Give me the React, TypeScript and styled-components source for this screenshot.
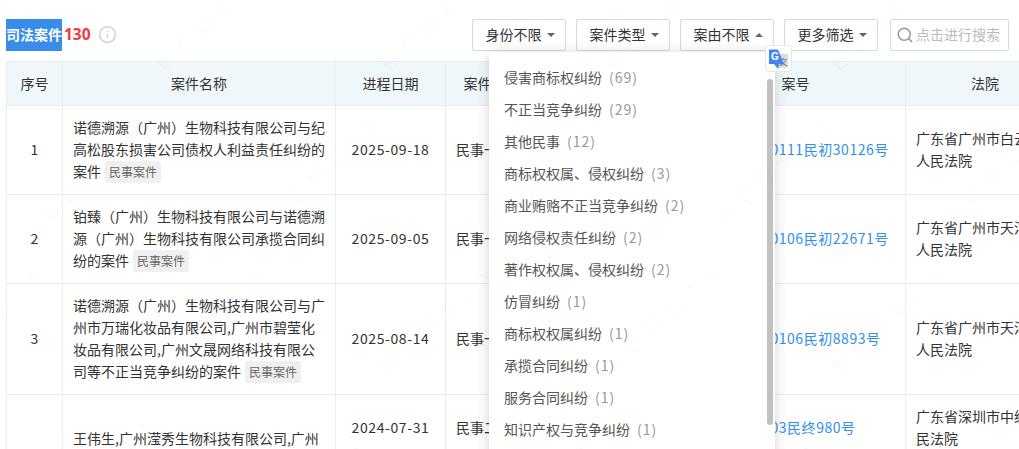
import React from "react";
import styled, { createGlobalStyle } from "styled-components";
import { Info, Search } from "lucide-react";

const Global = createGlobalStyle`
  html, body { margin: 0; padding: 0; background: #fff; overflow: hidden; }
  body { font-family: "Noto Sans CJK SC", "Noto Sans", sans-serif; color: #333; font-size: 14px; }
`;

const Page = styled.div`
  position: relative;
  width: 1019px;
  height: 449px;
  overflow: hidden;
  padding: 19px 0 0 6px;
  box-sizing: border-box;
`;

const Toolbar = styled.div`
  display: flex;
  align-items: flex-start;
  height: 32px;
  margin-bottom: 10px;
  padding-right: 10px;
`;

const Title = styled.div`
  width: 56px;
  height: 32px;
  background: #3a8ceb;
  color: #fff;
  font-weight: 700;
  font-size: 14px;
  line-height: 30px;
  white-space: nowrap;
`;

const Count = styled.span`
  margin-left: 2px;
  color: #f0393f;
  font-family: "Noto Sans", sans-serif;
  font-weight: 700;
  font-size: 15.5px;
  line-height: 30px;
`;

const InfoMark = styled.span`
  display: flex;
  margin: 6px 0 0 7px;
  color: #d6d6d6;
`;

const Filters = styled.div`
  display: flex;
  gap: 10px;
  margin-left: auto;
`;

const FilterButton = styled.div`
  display: flex;
  align-items: center;
  justify-content: center;
  gap: 5px;
  width: 94px;
  height: 32px;
  padding: 0 0 2px 2px;
  box-sizing: border-box;
  border: 1px solid #d9d9d9;
  border-radius: 2px;
  color: #333;
  font-size: 14px;
`;

const Caret = styled.i<{ $up?: boolean }>`
  width: 0;
  height: 0;
  margin-top: 2px;
  border-left: 4px solid transparent;
  border-right: 4px solid transparent;
  border-top: ${(p) => (p.$up ? "0" : "4px solid #666")};
  border-bottom: ${(p) => (p.$up ? "4px solid #666" : "0")};
`;

const SearchBox = styled.div`
  display: flex;
  align-items: center;
  gap: 2px;
  width: 119px;
  height: 32px;
  margin-left: 2px;
  padding: 0 0 2px 5px;
  box-sizing: border-box;
  border: 1px solid #d9d9d9;
  border-radius: 2px;
  color: #bbb;
  font-size: 14px;
  white-space: nowrap;
  overflow: hidden;
  svg { color: #999; flex: none; margin-top: 2px; }
`;

const Table = styled.table`
  border-collapse: collapse;
  table-layout: fixed;
  width: 1058px;
  font-size: 14px;
  line-height: 22px;
`;

const HeadCell = styled.th`
  height: 41px;
  padding: 0 0 2px;
  background: #f0f7fb;
  border: 1px solid #e5edf5;
  font-weight: 400;
  color: #333;
  text-align: center;
`;

const Cell = styled.td<{ $center?: boolean; $top?: number }>`
  padding: ${(p) => (p.$top !== undefined ? `${p.$top}px 10px 0` : "10px 10px 12px")};
  border: 1px solid #e5edf5;
  color: #333;
  text-align: ${(p) => (p.$center ? "center" : "left")};
  vertical-align: ${(p) => (p.$top !== undefined ? "top" : "middle")};
  word-break: break-all;
`;

const NumberText = styled.span`
  letter-spacing: 0.6px;
  white-space: nowrap;
`;

const CaseLink = styled.span`
  display: block;
  margin-left: 16px;
  color: #2f90ee;
  letter-spacing: 0.55px;
  white-space: nowrap;
`;

const Tag = styled.span`
  display: inline-block;
  margin-left: 4px;
  padding: 0 4px;
  height: 22px;
  background: #f0f0f0;
  border-radius: 2px;
  color: #666;
  font-size: 12px;
  line-height: 22px;
  vertical-align: top;
  transform: translateY(1px);
`;

const Dropdown = styled.div`
  position: absolute;
  left: 489px;
  top: 52px;
  width: 286px;
  height: 420px;
  background: #fff;
  box-shadow: 0 2px 12px rgba(0, 0, 0, 0.18);
  padding-top: 9px;
  box-sizing: border-box;
`;

const Option = styled.div`
  height: 32px;
  padding-left: 15px;
  color: #555;
  font-size: 14px;
  line-height: 32px;
  white-space: nowrap;
`;

const OptionCount = styled.span`
  margin-left: 7px;
  color: #999;
  letter-spacing: 1px;
`;

const ScrollThumb = styled.div`
  position: absolute;
  left: 278px;
  top: 27px;
  width: 6px;
  height: 346px;
  border-radius: 3px;
  background: #c1c1c1;
`;

const TranslateBadge = styled.div`
  position: absolute;
  left: 765px;
  top: 45px;
  width: 27px;
  height: 27px;
  box-sizing: border-box;
  background: #fff;
  border: 1px solid #e6e6e6;
  border-radius: 4px;
  display: flex;
  align-items: center;
  justify-content: center;
`;

const Watermark = styled.div`
  position: absolute;
  inset: -60px -120px;
  display: grid;
  grid-template-columns: repeat(6, 225px);
  grid-auto-rows: 150px;
  pointer-events: none;
`;

const WatermarkText = styled.span<{ $shift: boolean }>`
  transform: translateX(${(p) => (p.$shift ? "112px" : "0")}) rotate(-42deg);
  align-self: center;
  justify-self: center;
  color: rgba(0, 0, 0, 0.028);
  font-family: "Liberation Sans", sans-serif;
  font-size: 20px;
  letter-spacing: 12px;
  white-space: nowrap;
`;

const options: [string, number][] = [
  ["侵害商标权纠纷", 69],
  ["不正当竞争纠纷", 29],
  ["其他民事", 12],
  ["商标权权属、侵权纠纷", 3],
  ["商业贿赂不正当竞争纠纷", 2],
  ["网络侵权责任纠纷", 2],
  ["著作权权属、侵权纠纷", 2],
  ["仿冒纠纷", 1],
  ["商标权权属纠纷", 1],
  ["承揽合同纠纷", 1],
  ["服务合同纠纷", 1],
  ["知识产权与竞争纠纷", 1],
  ["其他纠纷", 1],
];

const rows = [
  {
    n: 1,
    name: "诺德溯源（广州）生物科技有限公司与纪高松股东损害公司债权人利益责任纠纷的案件",
    date: "2025-09-18",
    stage: "民事一审",
    no: "(2025)粤0111民初30126号",
    court: "广东省广州市白云区人民法院",
  },
  {
    n: 2,
    name: "铂臻（广州）生物科技有限公司与诺德溯源（广州）生物科技有限公司承揽合同纠纷的案件",
    date: "2025-09-05",
    stage: "民事一审",
    no: "(2025)粤0106民初22671号",
    court: "广东省广州市天河区人民法院",
  },
  {
    n: 3,
    name: "诺德溯源（广州）生物科技有限公司与广州市万瑞化妆品有限公司,广州市碧莹化妆品有限公司,广州文晟网络科技有限公司等不正当竞争纠纷的案件",
    date: "2025-08-14",
    stage: "民事一审",
    no: "(2025)粤0106民初8893号",
    court: "广东省广州市天河区人民法院",
  },
];

const marks = Array.from({ length: 24 }, (_, i) => i);

export default function App() {
  return (
    <Page>
      <Global />
      <Toolbar>
        <Title>司法案件</Title>
        <Count>130</Count>
        <InfoMark>
          <Info size={19} strokeWidth={2} />
        </InfoMark>
        <Filters>
          <FilterButton>身份不限<Caret /></FilterButton>
          <FilterButton>案件类型<Caret /></FilterButton>
          <FilterButton>案由不限<Caret $up /></FilterButton>
          <FilterButton>更多筛选<Caret /></FilterButton>
          <SearchBox>
            <Search size={18} strokeWidth={2} />
            点击进行搜索
          </SearchBox>
        </Filters>
      </Toolbar>

      <Table>
        <colgroup>
          <col style={{ width: 56 }} />
          <col style={{ width: 273 }} />
          <col style={{ width: 110 }} />
          <col style={{ width: 92 }} />
          <col style={{ width: 148 }} />
          <col style={{ width: 220 }} />
          <col style={{ width: 159 }} />
        </colgroup>
        <thead>
          <tr>
            <HeadCell>序号</HeadCell>
            <HeadCell>案件名称</HeadCell>
            <HeadCell>进程日期</HeadCell>
            <HeadCell>案件身份</HeadCell>
            <HeadCell>当事人</HeadCell>
            <HeadCell>案号</HeadCell>
            <HeadCell>法院</HeadCell>
          </tr>
        </thead>
        <tbody>
          {rows.map((r) => (
            <tr key={r.n}>
              <Cell $center>{r.n}</Cell>
              <Cell>
                {r.name}
                <Tag>民事案件</Tag>
              </Cell>
              <Cell $center><NumberText>{r.date}</NumberText></Cell>
              <Cell>{r.stage}</Cell>
              <Cell />
              <Cell><CaseLink>{r.no}</CaseLink></Cell>
              <Cell>{r.court}</Cell>
            </tr>
          ))}
          <tr>
            <Cell $center $top={0} />
            <Cell $top={32}>王伟生,广州滢秀生物科技有限公司,广州</Cell>
            <Cell $center $top={21}><NumberText>2024-07-31</NumberText></Cell>
            <Cell $top={21}>民事二审</Cell>
            <Cell $top={0} />
            <Cell $top={21}><CaseLink>(2024)粤03民终980号</CaseLink></Cell>
            <Cell $top={10}>广东省深圳市中级人民法院</Cell>
          </tr>
        </tbody>
      </Table>

      <Dropdown>
        {options.map(([label, count]) => (
          <Option key={label}>
            {label}
            <OptionCount>({count})</OptionCount>
          </Option>
        ))}
        <ScrollThumb />
      </Dropdown>

      <TranslateBadge>
        <svg width="23" height="22" viewBox="0 0 23 22" aria-hidden="true">
          <rect x="10" y="6" width="11" height="14" fill="#dcdcdc" />
          <text x="12" y="17" fontSize="8.5" fill="#666" fontFamily="'Noto Sans CJK SC', sans-serif">文</text>
          <path d="M2 1.5 H11 L17 16 H12 L11 21 L7 16 H2 Z" fill="#4285f4" />
          <text x="4" y="12" fontSize="10" fontWeight="700" fill="#fff" fontFamily="'Liberation Sans', sans-serif">G</text>
        </svg>
      </TranslateBadge>

      <Watermark aria-hidden="true">
        {marks.map((i) => (
          <WatermarkText key={i} $shift={Math.floor(i / 6) % 2 === 1}>ECME2Y</WatermarkText>
        ))}
      </Watermark>
    </Page>
  );
}
